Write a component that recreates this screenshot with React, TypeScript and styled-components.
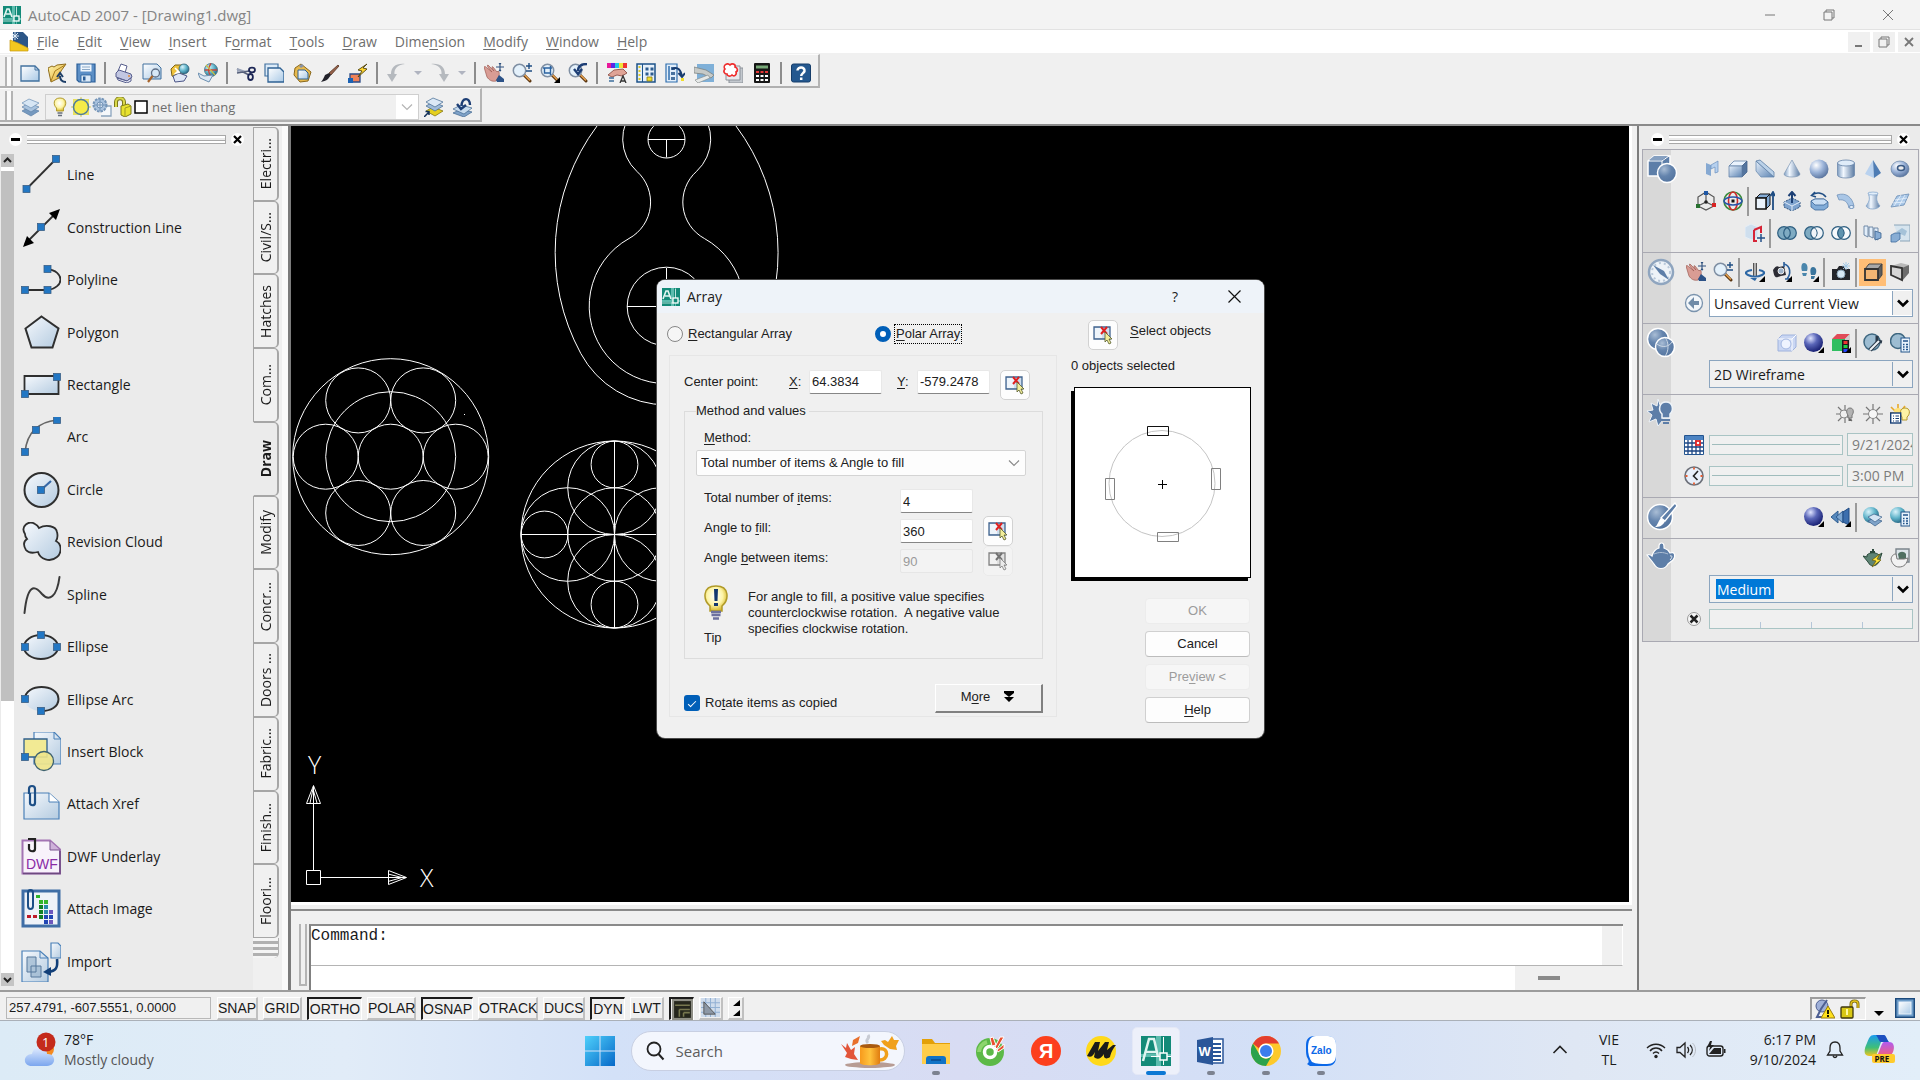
import React from 'react';
import styled, { createGlobalStyle, css } from 'styled-components';

const ui = '"Open Sans", "Noto Sans", sans-serif';
const sans = '"Liberation Sans", Arial, sans-serif';

const GlobalStyle = createGlobalStyle`
  *, *::before, *::after { box-sizing: border-box; }
  body { margin: 0; background: #f0f0f0; font-family: ${ui}; font-size: 14px; color: #1a1a1a; }
  button, input, select { font: inherit; color: inherit; margin: 0; }
  u { text-underline-offset: 2px; }
`;

/* ---------- shell ---------- */
const Shell = styled.div`
  display: flex;
  flex-direction: column;
  height: 100vh;
  overflow: hidden;
`;
const TitleBar = styled.header`
  display: flex;
  align-items: center;
  flex: none;
  height: 30px;
  padding: 0 6px 0 3px;
  gap: 7px;
  background: #f3f3f3;
  border-bottom: 1px solid #e2e2e2;
`;
const Title = styled.h1`
  flex: 1;
  margin: 0;
  font-size: 15px;
  font-weight: 400;
  color: #858585;
`;
const WindowButton = styled.button`
  display: grid;
  place-items: center;
  width: 52px;
  height: 28px;
  padding: 0;
  border: 0;
  background: none;
`;
const MenuBar = styled.nav`
  display: flex;
  align-items: center;
  flex: none;
  height: 23px;
  padding: 0 0 0 9px;
  background: #fff;
`;
const MenuItems = styled.div`
  display: flex;
  flex: 1;
  gap: 18px;
  padding-left: 8px;
`;
const MenuItem = styled.button`
  padding: 0;
  border: 0;
  background: none;
  color: #6e6e6e;
  line-height: 20px;
`;
const MdiButton = styled.button`
  display: grid;
  place-items: center;
  width: 22px;
  height: 20px;
  margin-left: 3px;
  padding: 0;
  border: 0;
  background: #f0f0f0;
`;
const ToolStrips = styled.div`
  display: flex;
  flex-direction: column;
  align-items: flex-start;
  flex: none;
  padding: 1px 0 2px;
`;
const ToolStrip = styled.div<{ $end: number }>`
  display: flex;
  align-items: center;
  height: 34px;
  padding: 4px ${p => p.$end}px 0 5px;
  border-top: 1px solid #fcfcfc;
  border-right: 2px solid #b4b4b4;
  border-bottom: 2px solid #b0b0b0;
`;
const Grip = styled.span`
  align-self: flex-end;
  width: 8px;
  height: 29px;
  margin-right: 3px;
  border: solid #b4b4b4;
  border-width: 0 2px 0 2px;
  background: #fafafa;
`;
const ToolButton = styled.button<{ $w: number }>`
  display: grid;
  place-items: center;
  width: ${p => p.$w}px;
  height: 26px;
  padding: 0;
  border: 0;
  background: none;
`;
const ToolRule = styled.span`
  width: 2px;
  height: 22px;
  margin: 0 4px;
  background: #8c8c8c;
`;
const LayerBox = styled.div`
  display: flex;
  align-items: center;
  width: 374px;
  height: 26px;
  margin: 0 1px;
  padding-left: 4px;
  gap: 1px;
  border: 1px solid #cfcfcf;
  background: #f0f0f0;
`;
const LayerSelect = styled.select`
  flex: 1;
  padding: 0 0 0 3px;
  border: 0;
  appearance: none;
  background: none;
  color: #6e6e6e;
  font-size: 13px;
`;
const LayerArrow = styled.span`
  display: grid;
  place-items: center;
  width: 22px;
  height: 24px;
  background: #fff;
`;

/* ---------- body ---------- */
const Body = styled.div`
  display: flex;
  flex: 1;
  min-height: 0;
  border-top: 2px solid #8a8a8a;
`;
const Palette = styled.aside`
  display: flex;
  flex: none;
  width: 291px;
  border-right: 3px solid #7c7c7c;
  background: #f0f0f0;
`;
const PaletteMain = styled.div`
  display: flex;
  flex-direction: column;
  flex: none;
  width: 253px;
  background: #ebebeb;
`;
const PaletteHead = styled.div`
  display: flex;
  align-items: center;
  flex: none;
  gap: 5px;
  height: 23px;
  padding: 3px 9px 0;
`;
const GripLines = styled.span`
  flex: 1;
  height: 9px;
  border: solid #a8a8a8;
  border-width: 1px 1px 1px 0;
  background: linear-gradient(#fff 2px, #ebebeb 2px 4px, #a8a8a8 4px 5px, #fff 5px);
`;
const RoundButton = styled.button`
  display: grid;
  place-items: center;
  width: 13px;
  height: 13px;
  padding: 0;
  border: 0;
  border-radius: 50%;
  background: #fff;
`;
const PaletteScroll = styled.div`
  display: flex;
  flex: 1;
  min-height: 0;
`;
const ScrollTrack = styled.div`
  display: flex;
  flex-direction: column;
  width: 14px;
  padding: 5px 0 4px 1px;
`;
const ScrollButton = styled.button`
  display: grid;
  place-items: center;
  height: 13px;
  padding: 0;
  border: 0;
  background: #c4c4c4;
`;
const ScrollRail = styled.div`
  flex: 1;
  padding: 4px 0 272px;
  background: #fff;
  &::before { content: ''; display: block; height: 100%; background: #c0c0c0; }
`;
const ToolList = styled.div`
  display: grid;
  grid-auto-rows: 1fr;
  flex: 1;
  padding: 0 0 2px 7px;
`;
const ToolItem = styled.button`
  display: flex;
  align-items: center;
  gap: 6px;
  min-height: 0;
  padding: 0;
  border: 0;
  background: none;
  text-align: left;
  line-height: 20px;
`;
const Tabs = styled.div`
  display: flex;
  flex-direction: column;
  width: 26px;
  padding: 1px 0 32px;
`;
const TabGrid = styled.div`
  display: grid;
  grid-auto-rows: 1fr;
  flex: 1;
`;
const Tab = styled.button<{ $on?: boolean }>`
  display: grid;
  place-items: center;
  min-height: 0;
  padding: 0;
  border: solid #a6a6a6;
  border-width: 1px 2px 1px 1px;
  border-radius: 0 5px 5px 0;
  background: #f0f0f0;
  font-weight: ${p => (p.$on ? 700 : 400)};
  ${p => p.$on && css`border-left-color: #ebebeb; background: #ebebeb;`}
  span { writing-mode: vertical-rl; transform: rotate(180deg); line-height: 20px; }
`;
const TabStack = styled.div`
  height: 20px;
  border-right: 1px solid #b0b0b0;
  border-radius: 0 0 5px 0;
  background: repeating-linear-gradient(#f4f4f4 0 3px, #b0b0b0 3px 6px);
`;
const Divider = styled.div`
  width: 6px;
  margin-left: auto;
  background: #fbfbfb;
`;
const Center = styled.main`
  display: flex;
  flex-direction: column;
  flex: 1;
  min-width: 0;
`;
const Canvas = styled.div`
  position: relative;
  flex: 1;
  min-height: 0;
  margin-right: 5px;
  border-right: 3px solid #fff;
  border-bottom: 3px solid #fff;
  background: #000;
`;
const CanvasArt = styled.svg`
  display: block;
  width: 100%;
  height: 100%;
`;
const CommandPane = styled.div`
  display: flex;
  flex: none;
  gap: 2px;
  margin-top: 4px;
  margin-right: 5px;
  padding: 13px 9px 0 8px;
  border-top: 2px solid #8a8a8a;
`;
const CommandGrip = styled.span`
  width: 8px;
  height: 62px;
  border: solid #b4b4b4;
  border-width: 0 2px 2px;
`;
const CommandBox = styled.div`
  flex: 1;
  border-left: 2px solid #808080;
  border-top: 2px solid #8a8a8a;
  font-family: "Liberation Mono", "Courier New", monospace;
  font-size: 16px;
`;
const CommandLog = styled.div`
  display: flex;
  height: 40px;
  border-right: 1px solid #fff;
  border-bottom: 1px solid #b4b4b4;
  line-height: 21px;
`;
const CommandText = styled.div`
  flex: 1;
  margin-right: 20px;
  background: #fff;
`;
const CommandRow = styled.div`
  display: flex;
  height: 24px;
`;
const CommandInput = styled.input`
  flex: 1;
  border: 0;
  padding: 0;
  background: #fff;
`;
const CommandScroll = styled.div`
  display: grid;
  place-items: center;
  width: 108px;
  padding-right: 40px;
  &::before { content: ''; width: 22px; height: 4px; background: #8a8a8a; }
`;

/* ---------- dashboard ---------- */
const Dashboard = styled.aside`
  flex: none;
  width: 283px;
  padding: 0 1px 0 3px;
  border-left: 2px solid #7c7c7c;
  background: #ebebeb;
`;
const Section = styled.section<{ $end: number }>`
  display: flex;
  border: solid #a9a9b2;
  border-width: 1px 1px 0 1px;
  min-height: ${p => 37 + p.$end}px;
  &:last-child { border-bottom-width: 1px; }
`;
const SectionBadge = styled.div`
  flex: none;
  width: 28px;
  padding: 4px 0 0 4px;
  background: #d8d8d8;
  svg { display: block; overflow: visible; }
`;
const SectionBody = styled.div<{ $end: number }>`
  display: flex;
  flex-direction: column;
  flex: 1;
  min-width: 0;
  padding: 3px 5px ${p => p.$end}px 12px;
`;
const IconRow = styled.div`
  display: flex;
  justify-content: flex-end;
  align-items: center;
  height: 32px;
`;
const DashButton = styled.button<{ $on?: boolean }>`
  display: grid;
  place-items: center;
  width: 27px;
  height: 27px;
  padding: 0;
  border: 0;
  background: ${p => (p.$on ? '#ffbe76' : 'none')};
`;
const DashRule = styled.span`
  width: 2px;
  height: 29px;
  margin: 0 2px 0 1px;
  background: #9a9a9a;
`;
const FieldRow = styled.div<{ $top: number }>`
  display: flex;
  align-items: center;
  gap: 4px;
  margin-top: ${p => p.$top}px;
`;
const FieldIcon = styled.span`
  display: grid;
  place-items: center;
  width: 22px;
  height: 20px;
`;
const DashCombo = styled.div<{ $white?: boolean }>`
  display: flex;
  flex: 1;
  align-items: stretch;
  height: 28px;
  border: 1px solid #8ba5bf;
  background: ${p => (p.$white ? '#fff' : '#f0f0f0')};
  select { flex: 1; min-width: 0; padding: 0 0 0 4px; border: 0; background: none; appearance: none; }
  span { display: grid; place-items: center; width: 20px; margin: 1px 0; border-left: 1px solid #8ba5bf; background: #f0f0f0; }
`;
const ComboInput = styled.input`
  width: 58px;
  height: 20px;
  margin: 3px auto 0 6px;
  padding: 0 1px;
  border: 0;
  background: #0078d7;
  color: #fff;
`;
const Slider = styled.input`
  flex: 1;
  min-width: 0;
  height: 20px;
  border: 1px solid #a9c4c4;
  appearance: none;
  background: linear-gradient(#a0bcbc, #a0bcbc) center / calc(100% - 4px) 1px no-repeat #f0f0f0;
  &::-webkit-slider-thumb { appearance: none; width: 0; }
`;
const DashText = styled.input`
  width: 66px;
  height: 23px;
  padding: 0 0 0 4px;
  border: 1px solid #a9c4c4;
  background: #f0f0f0;
  color: #7c7c7c;
`;
const Ticks = styled.div`
  flex: 1;
  height: 20px;
  border: 1px solid #a9c4c4;
  background: repeating-linear-gradient(90deg, transparent 0 50px, #b5c6d8 50px 51px) 0 100% / 100% 6px no-repeat #f0f0f0;
`;

/* ---------- dialog ---------- */
const Dialog = styled.div`
  position: absolute;
  left: 366px;
  top: 154px;
  width: 607px;
  border-radius: 8px;
  overflow: hidden;
  background: #f0f0f0;
  box-shadow: 0 0 0 1px #4a4a4a;
  font-family: ${sans};
  font-size: 13px;
  line-height: 16px;
  color: #202020;
`;
const DialogHead = styled.div`
  display: flex;
  align-items: center;
  gap: 7px;
  height: 33px;
  padding: 0 4px 0 5px;
  background: #eef3f9;
  font-family: ${ui};
  font-size: 14px;
  h2 { flex: 1; margin: 0; font-size: 14px; font-weight: 400; }
`;
const DialogBody = styled.div`
  display: flex;
  gap: 14px;
  padding: 7px 13px 15px 12px;
`;
const DialogLeft = styled.div`
  width: 389px;
`;
const DialogRight = styled.div`
  display: flex;
  flex-direction: column;
  flex: 1;
`;
const Radios = styled.div`
  display: flex;
  align-items: center;
  height: 28px;
  margin-left: -2px;
`;
const Choice = styled.label<{ $w?: number }>`
  display: flex;
  align-items: center;
  gap: 3px;
  width: ${p => (p.$w ? `${p.$w}px` : 'auto')};
`;
const Radio = styled.input`
  appearance: none;
  width: 16px;
  height: 16px;
  border: 1px solid #868686;
  border-radius: 50%;
  background: #f6f6f6;
  &:checked { border: 5px solid #005fb8; background: #fff; }
`;
const ChoiceText = styled.span<{ $focus?: boolean }>`
  padding: 1px;
  border: 1px ${p => (p.$focus ? 'dotted #000' : 'solid transparent')};
`;
const Panel = styled.div`
  margin-top: 7px;
  padding: 14px 13px 3px 14px;
  border: 1px solid #e6e6e6;
`;
const PointRow = styled.div`
  display: flex;
  align-items: flex-start;
  height: 30px;
  line-height: 24px;
`;
const PointName = styled.span`
  width: 105px;
`;
const AxisName = styled.label`
  width: 20px;
`;
const TextField = styled.input<{ $gap?: number }>`
  width: 73px;
  height: 24px;
  margin-right: ${p => p.$gap ?? 0}px;
  padding: 0 2px;
  border: 1px solid #e8e8e8;
  border-bottom-color: #868686;
  border-radius: 2px;
  background: #fff;
  &:disabled { border-color: #e6e6e6; background: #f3f3f3; color: #9a9a9a; }
`;
const PickButton = styled.button`
  display: grid;
  place-items: center;
  flex: none;
  width: 30px;
  height: 30px;
  padding: 0;
  border: 1px solid #d2d2d2;
  border-radius: 5px;
  background: #fdfdfd;
  &:disabled { border-color: #e8e8e8; background: #f5f5f5; filter: grayscale(1); opacity: 0.75; }
`;
const Methods = styled.fieldset`
  min-width: 0;
  height: 256px;
  margin: 3px 0 0;
  padding: 5px 11px 0;
  border: 1px solid #dcdcdc;
  legend { padding: 0 3px 0 0; line-height: 16px; }
`;
const MethodLabel = styled.label`
  display: block;
  margin: 6px 0 4px 8px;
`;
const MethodCombo = styled.div`
  display: flex;
  align-items: center;
  height: 26px;
  margin: 0 5px 10px 0;
  padding-right: 5px;
  border: 1px solid #d4d4d4;
  border-radius: 2px;
  background: #fdfdfd;
  select { flex: 1; padding: 0 0 0 4px; border: 0; background: none; appearance: none; }
`;
const ValueRow = styled.div`
  display: flex;
  align-items: center;
  gap: 10px;
  height: 30px;
  padding-left: 8px;
  label { width: 186px; padding-bottom: 6px; }
`;
const TipRow = styled.div`
  display: flex;
  gap: 20px;
  margin: 9px 0 0 8px;
  p { margin: 4px 0 0; white-space: pre-line; }
`;
const TipIcon = styled.div`
  width: 24px;
  svg { display: block; margin-bottom: 9px; }
`;
const PanelFoot = styled.div`
  display: flex;
  justify-content: space-between;
  align-items: flex-end;
  margin-top: 25px;
  height: 29px;
`;
const Tick = styled.input`
  appearance: none;
  display: grid;
  place-items: center;
  width: 16px;
  height: 16px;
  border-radius: 3px;
  background: #005fb8;
  &::after { content: ''; width: 8px; height: 4px; border: solid #fff; border-width: 0 0 1px 1px; transform: rotate(-45deg); }
`;
const MoreButton = styled.button`
  display: flex;
  align-items: center;
  justify-content: center;
  gap: 14px;
  width: 108px;
  height: 29px;
  padding: 0 2px 2px 0;
  border: solid;
  border-width: 1px 2px 2px 1px;
  border-color: #fff #808080 #808080 #fff;
  background: #f0f0f0;
`;
const SelectRow = styled.div`
  display: flex;
  gap: 12px;
  padding-left: 17px;
  label { padding-top: 3px; }
`;
const Picked = styled.p`
  margin: 8px 0 13px;
`;
const DialogButtons = styled.div`
  display: flex;
  flex-direction: column;
  align-items: flex-end;
  gap: 7px;
  margin-top: 17px;
  padding-right: 1px;
`;
const DialogButton = styled.button`
  width: 105px;
  height: 26px;
  padding: 0;
  border: 1px solid #d0d0d0;
  border-bottom-color: #bcbcbc;
  border-radius: 4px;
  background: #fdfdfd;
  &:disabled { border-color: #ececec; background: #f6f6f6; color: #9c9c9c; }
`;

/* ---------- status bar ---------- */
const StatusBar = styled.footer`
  display: flex;
  align-items: center;
  flex: none;
  height: 31px;
  padding: 4px 2px 0 6px;
  border-top: 2px solid #9c9c9c;
  border-bottom: 1px solid #aab0b8;
  font-family: ${sans};
`;
const Coords = styled.output`
  width: 205px;
  height: 22px;
  margin-right: 6px;
  padding-left: 2px;
  border: 1px solid #b8b8b8;
  font-size: 13px;
  line-height: 20px;
`;
const Toggle = styled.button<{ $on?: boolean; $w: number }>`
  display: grid;
  place-items: center;
  width: ${p => p.$w}px;
  height: 23px;
  margin-right: 5px;
  padding: 0;
  border: solid;
  border-width: ${p => (p.$on ? '2px 1px 1px 2px' : '1px 2px 2px 1px')};
  border-color: ${p => (p.$on ? '#1c1c1c #fff #fff #1c1c1c' : '#fff #c0c0c0 #c0c0c0 #fff')};
  background: #f0f0f0;
  font-size: 14px;
  line-height: 18px;
  white-space: nowrap;
`;
const Spring = styled.span`
  flex: 1;
`;
const StatusTray = styled.div`
  display: flex;
  align-items: center;
  gap: 5px;
  height: 23px;
  padding: 0 5px 0 3px;
  border: solid;
  border-width: 2px 1px 1px 2px;
  border-color: #9c9c9c #fff #fff #9c9c9c;
`;
const StatusButton = styled.button<{ $low?: boolean }>`
  display: grid;
  justify-items: center;
  align-items: ${p => (p.$low ? 'end' : 'center')};
  width: 26px;
  height: 22px;
  padding: 0;
  border: 0;
  background: none;
`;

/* ---------- taskbar ---------- */
const Taskbar = styled.footer`
  display: grid;
  grid-template-columns: 1fr auto 1fr;
  align-items: center;
  flex: none;
  height: 59px;
  background: linear-gradient(90deg, #dcebf6 0%, #e1ecf8 18%, #d3e1f8 32%, #d8dcf3 50%, #d3e0f7 66%, #dfe7f4 82%, #e2eef9 100%);
`;
const Weather = styled.button`
  display: flex;
  align-items: center;
  justify-self: start;
  gap: 8px;
  padding: 0 0 2px 24px;
  border: 0;
  background: none;
  text-align: left;
  line-height: 20px;
  small { display: block; font-size: 14px; color: #555; }
`;
const TaskCenter = styled.div`
  display: flex;
  align-items: center;
  gap: 7px;
`;
const TaskButton = styled.button<{ $active?: boolean }>`
  display: grid;
  place-items: center;
  width: 48px;
  height: 48px;
  padding: 0;
  border: 1px solid ${p => (p.$active ? '#e4e8f6' : 'transparent')};
  border-radius: 5px;
  background: ${p => (p.$active ? '#edf0fa' : 'none')};
`;
const TaskSlot = styled.div<{ $mark: 'none' | 'dot' | 'bar' }>`
  position: relative;
  &::after {
    content: '';
    position: absolute;
    bottom: 0;
    left: 50%;
    width: ${p => (p.$mark === 'bar' ? 20 : 8)}px;
    margin-left: ${p => (p.$mark === 'bar' ? -10 : -4)}px;
    height: ${p => (p.$mark === 'none' ? 0 : 4)}px;
    border-radius: 2px;
    background: ${p => (p.$mark === 'bar' ? '#0c78d4' : '#7c8290')};
  }
`;
const SearchBox = styled.label`
  display: flex;
  align-items: center;
  width: 274px;
  height: 40px;
  padding: 0 3px 0 13px;
  border: 1px solid #c8cfe2;
  border-radius: 20px;
  background: #f3f6fd;
  input { flex: 1; min-width: 0; margin-left: 11px; padding: 0; border: 0; background: none; font-size: 15px; outline: 0; }
  input::placeholder { color: #5c5c5c; opacity: 1; }
`;
const SystemTray = styled.div`
  display: flex;
  align-items: center;
  justify-self: end;
  gap: 10px;
  padding: 0 14px 2px 0;
  line-height: 20px;
`;
const TrayButton = styled.button<{ $w: number; $end?: boolean }>`
  display: grid;
  justify-items: ${p => (p.$end ? 'end' : 'center')};
  align-items: center;
  width: ${p => p.$w}px;
  min-height: 40px;
  padding: 0;
  border: 0;
  background: none;
  text-align: ${p => (p.$end ? 'right' : 'center')};
  white-space: nowrap;
`;
const GradientSheet = styled.svg`
  position: absolute;
  width: 0;
  height: 0;
`;

/* ---------- drawings ---------- */
const Art = ({ size = 20, h, box, children }: { size?: number; h?: number; box?: string; children: React.ReactNode }) => (
  <svg width={size} height={h ?? size} viewBox={box ?? '0 0 20 20'} fill="none" aria-hidden="true">{children}</svg>
);

const Gradients = () => (
  <GradientSheet aria-hidden="true">
    <defs>
      <linearGradient id="paper" x1="0" y1="0" x2="1" y2="1"><stop stopColor="#fff" /><stop offset="1" stopColor="#a9c9e6" /></linearGradient>
      <linearGradient id="steel" x1="0" y1="0" x2="1" y2="1"><stop stopColor="#e6f0fb" /><stop offset="1" stopColor="#5c83b2" /></linearGradient>
      <linearGradient id="tube" x1="0" y1="0" x2="1" y2="0"><stop stopColor="#7d9cc0" /><stop offset=".35" stopColor="#f2f8ff" /><stop offset="1" stopColor="#5b7ba3" /></linearGradient>
      <linearGradient id="shape" x1="0" y1="0" x2="1" y2="1"><stop stopColor="#f6f9fd" /><stop offset="1" stopColor="#b4cbe0" /></linearGradient>
      <radialGradient id="ball" cx=".35" cy=".3" r=".75"><stop stopColor="#fff" /><stop offset=".5" stopColor="#9db5da" /><stop offset="1" stopColor="#56719c" /></radialGradient>
      <radialGradient id="badge" cx=".35" cy=".3" r=".75"><stop stopColor="#a9bdd5" /><stop offset=".5" stopColor="#6484ad" /><stop offset="1" stopColor="#52739e" /></radialGradient>
      <radialGradient id="navy" cx=".35" cy=".28" r=".75"><stop stopColor="#dfe4ff" /><stop offset=".45" stopColor="#5a66b8" /><stop offset="1" stopColor="#171f72" /></radialGradient>
      <radialGradient id="globe" cx=".35" cy=".3" r=".8"><stop stopColor="#d8f3fb" /><stop offset=".5" stopColor="#5fb3c9" /><stop offset="1" stopColor="#1c5878" /></radialGradient>
      <linearGradient id="gold" x1="0" y1="0" x2="1" y2="1"><stop stopColor="#fff6b0" /><stop offset="1" stopColor="#e3a92a" /></linearGradient>
      <radialGradient id="bulb" cx=".45" cy=".4" r=".6"><stop stopColor="#fff" /><stop offset=".6" stopColor="#fdf4a6" /><stop offset="1" stopColor="#d8b92c" /></radialGradient>
      <linearGradient id="win" x1="0" y1="0" x2="1" y2="1"><stop stopColor="#4fd0fb" /><stop offset="1" stopColor="#0668c8" /></linearGradient>
      <linearGradient id="cloud" x1="0" y1="0" x2="0" y2="1"><stop stopColor="#e3edff" /><stop offset="1" stopColor="#7ba6ee" /></linearGradient>
      <linearGradient id="mug" x1="0" y1="0" x2="1" y2="0"><stop stopColor="#f79a1c" /><stop offset=".5" stopColor="#ffc23c" /><stop offset="1" stopColor="#e07c10" /></linearGradient>
      <linearGradient id="cp1" x1="0" y1="0" x2="0" y2="1"><stop stopColor="#1a9bf0" /><stop offset=".6" stopColor="#3fbf77" /><stop offset="1" stopColor="#f2c51d" /></linearGradient>
      <linearGradient id="cp2" x1="0" y1="0" x2="0" y2="1"><stop stopColor="#b05cf0" /><stop offset="1" stopColor="#f2607c" /></linearGradient>
    </defs>
  </GradientSheet>
);

const AppLogo = ({ size = 18 }: { size?: number }) => (
  <Art size={size} box="0 0 18 18">
    <rect width="18" height="18" fill="#138a78" />
    <path d="M9 0h3v18H9zM13 0h1v18h-1zM0 12h18v2H0z" fill="#5cbcae" />
    <path d="M1 11 4 3h2l3 8M3 8h5" stroke="#e4f6f2" strokeWidth="1.6" />
    <path d="M0 15h11M13.5 1v9" stroke="#d5efea" strokeWidth=".8" />
    <rect x="11" y="10" width="5" height="5" fill="#138a78" stroke="#fff" strokeWidth="1.3" />
  </Art>
);

const lens = (
  <>
    <path d="m12 12 6 6" stroke="#5a3510" strokeWidth="3" strokeLinecap="round" />
    <path d="m12.5 12 5 5" stroke="#e6a04c" strokeWidth="1.5" strokeLinecap="round" />
    <circle cx="7.5" cy="7.5" r="6.2" fill="#e4f1fb" stroke="#7f8fa3" strokeWidth="1.5" />
  </>
);
const hand = (
  <>
    <path d="M0 4c1-1 2 0 3 1L8 9C5 6 2 2 4 2l6 6C8 5 7 3 9 4l4 5 1-1c2 1 1 4 1 6l-3 4c-4 1-7-1-9-4Z" fill="#d99c94" stroke="#9c5a52" strokeWidth=".7" />
    <path d="m12 17 3-5 5 4v3h-7Z" fill="#2c5287" />
    <path d="M16 0v8M12 4h8M15 1l1-1 1 1M15 7l1 1 1-1" stroke="#2c4f7d" strokeWidth="1.1" />
  </>
);
const flyout = <path d="M20 14v6h-6Z" fill="#000" />;
const calc = (
  <g>
    <rect x="11" y="5" width="9" height="14" fill="#e9f3fc" stroke="#23548a" />
    <path d="M13 8h5M13 11.5h1.500M16 11.5h2M13 14h1.500M16 14h2M13 16.5h1.500M16 16.5h2" stroke="#23548a" strokeWidth="1.3" />
  </g>
);

const icons: Record<string, React.ReactNode> = {
  file: <><path d="M1 3h14l4 4v11H1Z" fill="url(#paper)" stroke="#41719f" strokeWidth="1.3" /><path d="M15 3v4h4" stroke="#41719f" /></>,
  open: <><path d="m0 5 4-2 2 1 3-2 9-1-5 7-2 7-8 4Z" fill="url(#gold)" stroke="#8f6c1d" /><path d="M3 18 7 8l10-6" stroke="#a77d1e" /><path d="M18 19c-4 0-6-2-6-6M9 14l3-4 3 4" stroke="#1d3e68" strokeWidth="2" /></>,
  save: <><path d="M1 1h18v18H3l-2-2Z" fill="#5c8fc6" stroke="#2a5e98" strokeWidth="1.2" /><path d="M4.5 1.5h11v7h-11Z" fill="#eef5fc" /><path d="M6 4h8M6 6.5h8" stroke="#8aa8c7" /><path d="M5 12h10v7H5Z" fill="#dbe9f7" stroke="#2a5e98" strokeWidth=".8" /><path d="M7 13.5h2.500v4H7Z" fill="#2a5e98" /></>,
  print: <><path d="m4 8 3-7 6 2-2 7Z" fill="#fff" stroke="#565d8c" /><path d="m2 10 3-3 12 4 1 3-5 4-11-4Z" fill="#c2c7e2" stroke="#565d8c" /><path d="m3 15 10 3 4-3v3l-4 2-9-3Z" fill="#eceefa" stroke="#565d8c" /><circle cx="15" cy="13" r="1" fill="#e08c3c" /></>,
  preview: <><path d="M1 1h14l4 4v11H1Z" fill="url(#paper)" stroke="#41719f" /><circle cx="13.5" cy="10" r="4" fill="#d7e8f7" stroke="#5d6e86" strokeWidth="1.3" /><path d="m10.5 13-4.500 6" stroke="#a7642a" strokeWidth="2.2" /></>,
  publish: <><path d="m1 6 4-4h7l4 5-6 9-8-3Z" fill="#efc23c" stroke="#7d6418" /><circle cx="14" cy="6" r="5" fill="url(#globe)" stroke="#2d6077" strokeWidth=".8" /><path d="m3 13 6-3 8 3-3 5-9 1Z" fill="#dfe6f5" stroke="#4c5688" /><path d="m5 5 3 3-2 2 4-1" stroke="#fff" strokeWidth="1.6" /></>,
  web: <><circle cx="13" cy="7" r="6.5" fill="url(#globe)" stroke="#406f80" strokeWidth=".8" /><path d="M13 .5c-3 4-3 9 0 13M7 7h12" stroke="#c8433a" strokeWidth="1.3" /><path d="m8 2 9 10" stroke="#c9c045" strokeWidth="1.2" /><path d="m0 10 6 3 9-1-4 7-9-4Z" fill="#dbe8f5" stroke="#6c8fb0" /></>,
  cut: <><path d="m1 6 12 6M1 10l12-2" stroke="#56607a" strokeWidth="1.6" /><path d="m1 5 9 3-9 1Z" fill="#9aa3b8" /><ellipse cx="16" cy="7" rx="3" ry="2.3" stroke="#1d2756" strokeWidth="1.8" /><ellipse cx="14.5" cy="14" rx="2.4" ry="3" stroke="#1d2756" strokeWidth="1.8" /></>,
  copy: <><path d="M1 1h13v12H1Z" fill="#dcebf8" stroke="#41719f" strokeWidth="1.2" /><path d="M4 5h12l4 4v10H4Z" fill="url(#paper)" stroke="#2f6294" strokeWidth="1.3" /></>,
  paste: <><path d="m3 5 6-4 10 8-3 9-8 1-6-7Z" fill="#e7b94d" stroke="#8a681b" /><path d="m7 3 3-2 2 2-3 2Z" fill="#8892a5" /><path d="M6 7h7l3 3v6H6Z" fill="url(#paper)" stroke="#2f6294" /></>,
  brush: <><path d="m18 2-9 8 2 2 8-9Z" fill="#96614a" stroke="#553322" strokeWidth=".8" /><path d="m9 10 2 2-3 4c-2 2-5 2-7 3 2-2 3-5 4-7Z" fill="#22222a" /></>,
  matchprop: <><path d="M2 11h10v8H2Z" fill="#ee8158" stroke="#2b4b87" strokeWidth="1.3" /><rect y="15" width="5" height="5" fill="#1b62b4" /><path d="m19 1-9 6 4 1-4 6 9-8-4-1Z" fill="#ffd52e" stroke="#4f4410" strokeWidth=".9" /></>,
  undo: <path d="M19 1C10 0 5 4 5 11H1l5 8 5-8H8.5C8 6 11 2 19 1Z" fill="#b5b9be" />,
  redo: <path d="M1 1c9-1 14 3 14 10h4l-5 8-5-8h2.500C12 6 9 2 1 1Z" fill="#b5b9be" />,
  pan: hand,
  zoom: <>{lens}<path d="M17 0v6M14 3h6M14 8h6" stroke="#1f4d83" strokeWidth="1.4" /></>,
  zoomwin: <>{lens}<path d="M4.5 5h6v5h-6ZM3 5h9M10.5 3v9" stroke="#2a62a0" strokeWidth="1.4" />{flyout}</>,
  zoomprev: <>{lens}<path d="M19 1c-6 0-9 2-9 7M6 6l4 5 4-5" stroke="#1d3e75" strokeWidth="2.4" /></>,
  props: <><path d="M0 0h4v5H0Z" fill="#e8189a" /><path d="M4 0h4v5H4Z" fill="#5a26e6" /><path d="M8 0h4v5H8Z" fill="#21c4e8" /><path d="M12 0h4v5h-4Z" fill="#f0e33a" /><path d="M16 0h4v5h-4Z" fill="#f03232" /><path d="m1 12 6-5 9-1 4 4-5 3-5-1-5 2Z" fill="#e0a496" stroke="#83433a" strokeWidth=".8" /><path d="M2 15h5M2 18h5" stroke="#3d6d9c" strokeWidth="1.5" /><path d="m13 20 3-7 3 7M14 18h4" stroke="#333" strokeWidth="1.3" /></>,
  center: <><path d="M1 1h18v18H1Z" fill="#e6f0fa" stroke="#1c5289" strokeWidth="1.5" /><path d="M3.5 3v14" stroke="#e0cc28" strokeWidth="2" strokeDasharray="2 2" /><path d="M6.5 1v18" stroke="#1c5289" /><path d="M9.5 4.5h3v3h-3ZM14.5 4.5h3v3h-3ZM9.5 9.5h3v3h-3ZM14.5 9.5h3v3h-3Z" fill="#2d5d90" /><path d="M11 14h5v4h-5Z" fill="#f2df2c" stroke="#857a17" strokeWidth=".8" /></>,
  toolpal: <><path d="M1 1h11v18H1Z" fill="#e2eefa" stroke="#2f6eae" strokeWidth="1.2" /><path d="M4 3v14" stroke="#2f6eae" strokeWidth="1.5" /><path d="M6 4h4v3H6ZM6 9h4v3H6ZM6 14h4v3H6Z" fill="#49729f" /><path d="M7 6c6-3 9 1 10 8M13.5 10l3.500 4 3-4" stroke="#183c70" strokeWidth="2" /><path d="M16 15h3v3h-3Z" fill="#f2df2c" /></>,
  sheets: <><path d="M3 1h17v18H3Z" fill="#7fb0d8" /><path d="m0 4 12 3 8 5-3 3-8-4-9-1Z" fill="#c6cac8" stroke="#7e8483" strokeWidth=".8" /><path d="m1 17 13-5 2 3-12 5Z" fill="#e6e9e8" stroke="#8b9190" strokeWidth=".7" /></>,
  markup: <><path d="M6 5h14v15H6Z" fill="#c3c8ce" stroke="#8c9299" /><path d="M3 3h14v14H3Z" fill="#e7eaee" stroke="#8c9299" /><path d="M2 2c2-2 4-1 5 0 2-2 6-1 5 2 3 1 3 4 1 5 1 3-2 5-4 3-2 2-5 1-5-1-3 0-4-3-2-5-1-1-1-3 0-4Z" fill="#fff" stroke="#ee2e2e" strokeWidth="1.7" /></>,
  quickcalc: <><rect x="2" width="16" height="20" rx="1" fill="#161616" /><path d="M4 2.5h12v3H4Z" fill="#77a877" /><path d="M4 9h3M8.5 9h3M13 9h3" stroke="#e53434" strokeWidth="2" /><path d="M4 13h3M8.5 13h3M13 13h3M4 17h3M8.5 17h3M13 17h3" stroke="#fff" strokeWidth="2" /></>,
  help: <><rect x=".5" y="1" width="19" height="18" rx="2" fill="#24588f" stroke="#153d6a" /><path d="M6.5 7.5C6.5 3.5 14 3.5 13.5 8c-.2 2-3.300 2.500-3.300 5M10.2 14.5V17" stroke="#fff" strokeWidth="2.5" /></>,
  layers: <><path d="m2 14 7-4 10 4-8 5Z" fill="#7599bf" stroke="#5d81a8" strokeWidth=".7" /><path d="m2 10 7-4 10 4-8 5Z" fill="#a9c3de" stroke="#5d81a8" strokeWidth=".7" /><path d="m2 6 7-4 10 4-8 5Z" fill="#d7e6f4" stroke="#6b8fb5" strokeWidth=".7" /></>,
  layerset: <><path d="m2 14 7-4 10 4-8 5Z" fill="#e5cf1e" stroke="#867811" strokeWidth=".8" /><path d="m2 9 7-4 10 4-8 5Z" fill="#9fbcda" stroke="#41678f" strokeWidth=".7" /><path d="m2 5 7-4 10 4-8 5Z" fill="#dbe9f6" stroke="#41678f" strokeWidth=".7" /><path d="m0 20 5-5M1.5 14.5H5V18" stroke="#12305a" strokeWidth="1.5" /></>,
  layerprev: <><path d="m1 16 8-4 11 3-8 5Z" fill="#7fa2c8" stroke="#41678f" strokeWidth=".7" /><path d="m1 12 8-4 11 3-8 6Z" fill="#c8dcef" stroke="#41678f" strokeWidth=".7" /><path d="M18 8C18 0 10 0 9.5 9M5 7l4 5 5-4" stroke="#1d3e75" strokeWidth="2.4" /></>,
  bulb: <><path d="M10 1c-7 0-7 7-3.500 10v3h7v-3C17 8 17 1 10 1Z" fill="url(#bulb)" stroke="#b39d32" /><path d="M7.5 16h5M8 18.5h4" stroke="#666e7a" strokeWidth="1.6" /></>,
  sun: <><path d="M2 2h16v16H2Z" fill="#e9e160" /><path d="M0 10h20M10 0v20" stroke="#dccf4a" /><circle cx="10" cy="10" r="7.5" fill="#f5ec48" stroke="#4f7d9c" strokeWidth="1.5" /></>,
  freeze: <><path d="M12 9h7v10H9" stroke="#8ba4bd" strokeWidth="1.3" fill="#f5f8fb" /><circle cx="8" cy="8" r="6.5" fill="#a9c2de" stroke="#7595b8" strokeWidth="2" strokeDasharray="2.5 1" /><circle cx="8" cy="8" r="3" fill="#d5e2f0" stroke="#7595b8" /><path d="M8 2v12M2 8h12" stroke="#7595b8" /></>,
  lock: <><path d="M3 10V5c0-5 8-5 8 0v6" stroke="#7d7a1c" strokeWidth="4" /><path d="M3 10V5c0-5 8-5 8 0v6" stroke="#d9d84b" strokeWidth="2" /><path d="m8 9 7-2 3 2v8l-6 3-4-2Z" fill="#e8e22e" stroke="#7d7a1c" /><path d="m12 11 6-2M12 11v8" stroke="#a19d20" /></>,
  wall: <><path d="m5 4 5 2v11l-5-2Z" fill="#86a9d2" /><path d="m10 6 7-4v11l-3 1v-6l-4 2Z" fill="#b6d0ee" stroke="#6b91bf" strokeWidth=".7" /></>,
  box: <><path d="m1 7 5-5h13l-5 5Z" fill="#eaf3fd" stroke="#6583a8" strokeWidth=".8" /><path d="m14 7 5-5v11l-5 5Z" fill="#54759f" stroke="#44628a" strokeWidth=".8" /><path d="M1 7h13v11H1Z" fill="url(#steel)" stroke="#6583a8" strokeWidth=".8" /></>,
  wedge: <><path d="M1 2v10l5 6h13Z" fill="url(#steel)" stroke="#6c8db2" strokeWidth=".8" /><path d="m1 2 4-1 14 12v5Z" fill="#bad1e8" stroke="#5d7da4" strokeWidth=".8" /></>,
  cone: <path d="M10 1 2 15c0 4 16 4 16 0Z" fill="url(#tube)" stroke="#7f98b5" strokeWidth=".7" />,
  sphere: <circle cx="10" cy="10" r="9.5" fill="url(#ball)" />,
  cylinder: <><path d="M1.5 4v12c0 4 17 4 17 0V4Z" fill="url(#tube)" stroke="#6583a8" strokeWidth=".7" /><ellipse cx="10" cy="4" rx="8.5" ry="3" fill="#dfecf9" stroke="#6583a8" strokeWidth=".8" /></>,
  pyramid: <><path d="M10 1 2 15l9 4Z" fill="#b9d2ef" /><path d="m10 1 1 18 7-5Z" fill="#4e7cb4" /></>,
  torus: <><ellipse cx="10" cy="10" rx="9" ry="8" fill="url(#ball)" stroke="#5b789c" strokeWidth=".6" /><ellipse cx="11" cy="9" rx="3.5" ry="2.5" fill="#ebebeb" stroke="#3b5b85" strokeWidth="1.5" /></>,
  ucs: <><path d="m10 1 8 5v9l-8 4-8-4V6ZM10 1v10M10 11l-8 4M10 11l8 4" stroke="#555" strokeWidth="1.2" /><path d="M8 0h4v4H8Z" fill="#1f57a5" /><path d="M0 13h4v4H0Z" fill="#27702f" /><path d="M16 12h4v4h-4Z" fill="#d82424" /><circle cx="10" cy="11" r="1.8" fill="#222" /></>,
  orbitball: <><circle cx="10" cy="10" r="9" stroke="#3a8a3c" strokeWidth="1.6" /><ellipse cx="10" cy="10" rx="4.500" ry="9" stroke="#d02a2a" strokeWidth="1.6" /><ellipse cx="10" cy="10" rx="9" ry="4" stroke="#2854a8" strokeWidth="1.6" /><path d="M8.5 8.500h3v3h-3Z" fill="#111" /></>,
  extrude: <><path d="m1 7 4-4h10l-4 4ZM11 7l4-4v11l-4 4Z" fill="#83abd6" stroke="#111" /><path d="M1 7h10v11H1Z" fill="#e9f2fb" stroke="#111" strokeWidth="1.5" /><path d="M18 19V3M15.5 5 18 1l2 4" stroke="#1f4d83" strokeWidth="1.8" /></>,
  presspull: <><path d="m10 7 8 4v5l-8 4-8-4v-5Z" fill="#7ea3ce" stroke="#2c527f" strokeDasharray="2 1" /><path d="m2 11 8 4 8-4M10 15v5" stroke="#dfeaf6" /><path d="M10 12V2M6.5 5 10 1l3.500 4" stroke="#1b3f74" strokeWidth="2" /></>,
  revolve: <><path d="m2 10 4-2h9l4 3v5l-4 3H6l-4-3Z" fill="#82acd8" stroke="#3c689a" strokeWidth=".8" /><path d="m2 10 4-2h9l4 3-4 3H6Z" fill="#c9def4" stroke="#3c689a" strokeWidth=".8" /><path d="M17 6C13 1 7 1 3 4M6 1 2.5 4.5 7 6" stroke="#1f4d83" strokeWidth="1.5" /></>,
  sweep: <><path d="M1 4c9-3 15 2 17 11l-5 2C12 11 8 8 3 9Z" fill="#a9c6e6" stroke="#7092ba" strokeWidth=".8" /><ellipse cx="15.5" cy="16" rx="2.5" ry="1.5" fill="#e4effa" stroke="#7092ba" /></>,
  loft: <><path d="M5 2h10c-2 5-2 8 2 13-3 4-12 4-14 0C7 10 7 7 5 2Z" fill="url(#tube)" stroke="#84a6cc" strokeWidth=".8" /><ellipse cx="10" cy="2.5" rx="5" ry="1.5" fill="#e2eefa" stroke="#84a6cc" strokeWidth=".7" /></>,
  planar: <><path d="m7 5 12-2-5 11-13 2Z" fill="#aac8e8" stroke="#7c9cc0" /><path d="m11 4-7 11M15 4 9 15M5 9l12-2M3 12l12-1" stroke="#eaf3fc" strokeWidth=".8" /></>,
  section: <><path d="m0 4 6-3 7 3v10l-6 3-7-3Z" fill="#cfdfee" stroke="#e6eef6" /><path d="m9 7 7-3v6M9 7v11h3" stroke="#d62336" strokeWidth="2" /><path d="M16 11v8M12 15h8" stroke="#24518a" strokeWidth="1.5" /></>,
  union: <><circle cx="7" cy="10" r="6.3" fill="#7fabc2" /><circle cx="13" cy="10" r="6.3" fill="#7fabc2" stroke="#2d5e80" strokeWidth="1.2" /><circle cx="7" cy="10" r="6.3" stroke="#2d5e80" strokeWidth="1.2" /></>,
  subtract: <><circle cx="7" cy="10" r="6.3" fill="#7fabc2" stroke="#2d5e80" strokeWidth="1.2" /><circle cx="13" cy="10" r="6.3" fill="#f0f4f8" stroke="#2d5e80" strokeWidth="1.2" /><path d="M10 4.5a6.300 6.300 0 0 1 0 11" stroke="#2d5e80" /></>,
  intersect: <><circle cx="7" cy="10" r="6.3" fill="#f6f9fc" stroke="#2d5e80" strokeWidth="1.2" /><circle cx="13" cy="10" r="6.3" fill="#f6f9fc" stroke="#2d5e80" strokeWidth="1.2" /><path d="M10 4.5a6.300 6.300 0 0 1 0 11 6.300 6.300 0 0 1 0-11Z" fill="#5e92ae" stroke="#2d5e80" /></>,
  plane3d: <><path d="M1 3h4v11l-4-2ZM6 4h4v11l-4-2ZM11 5h4v12l-4-2Z" fill="#e2eefa" stroke="#64809f" strokeWidth=".9" /><path d="m12 8 6 2v5l-6 2Z" fill="#87acd4" stroke="#3a628f" strokeWidth=".8" /></>,
  flatshot: <><path d="M4 2h16v16H10" fill="#d6e4ee" stroke="#8aa4b8" /><path d="m6 9 6-4 5 3-2 5" fill="#a5c2d8" /><path d="m1 12 4-2h5v6l-4 3H1Z" fill="#88add4" stroke="#3f6c9e" strokeWidth=".8" /></>,
  orbit: <><path d="M10 1v14" stroke="#555" strokeWidth="4" /><path d="M10 1v14" stroke="#ccc" strokeWidth="1.5" /><path d="M7 8c-6 1-8 3-4 5s10 2 14 0 2-4-3-5" stroke="#2d68a6" strokeWidth="2.2" /><path d="m10 19-5-3h7Z" fill="#2d68a6" />{flyout}</>,
  swivel: <><path d="M1 8c3-5 5-4 6-3l5-1 2 9-5 1-3 1c-3 1-4-1-5-7Z" fill="#2c2c34" /><circle cx="9" cy="9" r="3" fill="#9fb5cc" stroke="#eee" /><path d="M12 2c7 2 7 10 3 15M12 0v5M13 17h5" stroke="#2b5f9b" strokeWidth="1.6" />{flyout}</>,
  walk: <><path d="M5 1c4 0 4 6 3 8H3C2 6 2 1 5 1ZM3 11h5l-1 3H4Z" fill="#4a86ac" /><path d="M14 5c4 0 4 6 2 8h-4c-1-4-1-8 2-8ZM12 14h4l-1 3h-3Z" fill="#3a759d" />{flyout}</>,
  camera: <><path d="M1 7h5l2-3h5l1 3h5v11H1Z" fill="#23252b" /><circle cx="10" cy="12" r="4" fill="#d6e8f5" stroke="#8ba4b8" /><path d="M15 0v8M11 4h8M12 1l6 6M18 1l-6 6" stroke="#9ec7e8" strokeWidth=".9" /></>,
  parallel: <><path d="m2 7 4-5h13l-4 5Z" fill="#a8a8a8" stroke="#444" /><path d="m15 7 4-5v11l-4 5Z" fill="#5c5c5c" stroke="#444" /><path d="M2 7h13v11H2Z" fill="#f2b573" stroke="#333" strokeWidth="1.8" /></>,
  perspective: <><path d="m1 4 10-3 8 2-5 4Z" fill="#b9b9b9" /><path d="m12 6 7-3v8l-7 8Z" fill="#6c6c6c" /><path d="m1 4 11 2v12L1 13Z" fill="#d5d5d5" stroke="#333" strokeWidth="1.8" /></>,
  xray: <><path d="m1 6 4-4h14v12l-4 4H1Z" fill="#c9d6f3" stroke="#9eb2dd" /><path d="M1 6h14v12M15 6l4-4" stroke="#fff" /><circle cx="9" cy="11" r="5" fill="#eef3ff" stroke="#a3b7e2" /></>,
  navyball: <><circle cx="9.5" cy="9.5" r="9.5" fill="url(#navy)" />{flyout}</>,
  facecolor: <><path d="m1 6 5-5h13l-5 5Z" fill="#e04b58" /><path d="m14 6 5-5v12l-5 5Z" fill="#ccc" /><path d="M1 6h13v12H1Z" fill="#2fbe60" /><path d="M11 7h7v13h-7Z" fill="#1b1b1b" /><path d="M12.5 8h4v3h-4Z" fill="#e33" /><path d="M12.5 12h4v3h-4Z" fill="#2c4" /><path d="M12.5 16h4v3h-4Z" fill="#24f" />{flyout}</>,
  vstools: <><circle cx="9" cy="9" r="8" fill="#9dbdd2" stroke="#3e6780" strokeWidth="1.5" /><path d="m7 17 9-9" stroke="#2a3a4a" strokeWidth="4" /><path d="m14 3 0 5 5 1" stroke="#2a3a4a" strokeWidth="3" /><path d="m7 17 9-9" stroke="#eef3f7" strokeWidth="2" /></>,
  vsmanager: <><circle cx="8" cy="8" r="7.5" fill="#9dbdd2" stroke="#3e6780" strokeWidth="1.5" />{calc}</>,
  lightgray: <><path d="M9 1v18M0 10h10M2 3l14 14M2 17 9 10" stroke="#777" strokeWidth="1.2" /><circle cx="8" cy="10" r="4" fill="#eee" stroke="#888" /><path d="M14 4c-4 0-4 5-2 7v3h4v-3c2-2 2-7-2-7Z" fill="#b3b3b3" stroke="#777" /><path d="M12.5 16h3" stroke="#666" strokeWidth="2" /></>,
  sungray: <><path d="M10 0v20M0 10h20M3 3l14 14M17 3 3 17" stroke="#777" strokeWidth="1.2" /><circle cx="10" cy="10" r="4.5" fill="#f6f6f6" stroke="#888" /></>,
  lightlist: <><path d="M8 0v5M1 3l4 4M15 2l-3 4M0 9h4" stroke="#e8a92a" strokeWidth="1.6" /><circle cx="8" cy="8" r="4" fill="#ffe27a" /><path d="M15 4c-6 0-5 7-3 9v3h5v-3c3-2 4-9-2-9Z" fill="#fdf3a4" stroke="#b5982e" /><rect x=".7" y="9" width="10" height="10" fill="#fff" stroke="#173f77" strokeWidth="1.4" /><path d="M3 12h1M5.5 12H9M3 14.5h1M5.5 14.5H9M3 17h1M5.5 17H9" stroke="#173f77" /></>,
  calendar: <><path d="M.5.5h19v19H.5Z" fill="#fff" stroke="#23548f" /><path d="M1 1h18v4H1Z" fill="#4c83c2" /><path d="M1 8h18M1 12h18M1 16h18M4 5v14M8 5v14M12 5v14M16 5v14" stroke="#1c4684" strokeWidth="1.3" /><rect x="12" y="6" width="4" height="4" fill="#fff" stroke="#e52828" strokeWidth="1.8" /></>,
  clock: <><circle cx="10" cy="10" r="9" fill="#e8effa" stroke="#6c7079" strokeWidth="1.6" /><path d="M10 1.5v2M10 16.5v2M1.5 10h2M16.5 10h2" stroke="#ea5c2c" strokeWidth="1.8" /><path d="m14 5-4.500 5 4 4" stroke="#222" strokeWidth="1.6" /></>,
  mapping: <><path d="m0 10 7-6v12Z" fill="#5588bd" stroke="#2e5c90" /><path d="m5 10 7-6v12Z" fill="#7ba6d2" stroke="#2e5c90" /><path d="m12 5 6-4v17l-6-3Z" fill="#3c6fae" stroke="#1f4a82" />{flyout}</>,
  matlayers: <><circle cx="8" cy="8" r="8" fill="url(#globe)" /><path d="m5 14 6-3 8 3-7 5Z" fill="#7fa3c9" stroke="#365d88" strokeWidth=".7" /><path d="m5 10 6-3 8 3-7 5Z" fill="#d4e4f3" stroke="#365d88" strokeWidth=".7" /></>,
  matmanager: <><circle cx="8" cy="8" r="8" fill="url(#globe)" />{calc}</>,
  render: <><path d="M4 7c3-3 9-3 12 0l3-2-3 9c-3 5-9 5-11 0L0 8l4 1Z" fill="#5e8474" stroke="#2b4a3c" /><path d="M7 4h5M9 2h2" stroke="#2b4a3c" strokeWidth="2" /><path d="m17 6-8 6 4 1-4 6 9-7-4-1Z" fill="#ffe53a" stroke="#6d6110" strokeWidth=".8" /></>,
  renderwin: <><path d="M6 1h13v13H6Z" fill="#dce5ea" stroke="#7c858c" strokeWidth="1.4" /><path d="M8 6c2-3 6-3 8 0v5H9Z" fill="#4f7062" /><path d="M1 11c1-4 3-5 5-5l1 5h7l4-1c-1 6-4 9-9 9-4 0-7-3-8-8Z" fill="#f2f2f2" stroke="#777" /></>,
  back: <><circle cx="10" cy="10" r="8.5" fill="#f2f6fa" stroke="#7a93ad" strokeWidth="1.3" /><path d="m10 4-6 6 6 6v-4h5V8h-5Z" fill="#6f8ba8" /></>,
  stop: <><circle cx="10" cy="10" r="6.5" fill="#f8f8f8" stroke="#999" /><path d="m6.5 6.5 7 7M13.5 6.5l-7 7" stroke="#222" strokeWidth="2.5" /></>,
  pick: <><path d="M1 2h16v12H1Z" fill="#cfdeee" stroke="#41648f" strokeWidth="1.3" /><path d="M2 3h7v10H2Z" fill="#eef4fa" /><path d="m8 2 6 7M14 2 8 9" stroke="#e02020" strokeWidth="2" /><path d="M12 7v10l2-2 2 4 2-1-2-4h3Z" fill="#f2ee9a" stroke="#555b2c" strokeWidth=".8" /></>,
};

const badges: React.ReactNode[] = [
  <><path d="m1 7 6-5h16v7l-8 13H1Z" fill="#5d7ea8" stroke="#fff" strokeWidth="1.5" /><path d="M1 7h14l7-5M15 7v14" stroke="#fff" /><path d="m2 6 5-4h14l-6 4Z" fill="#86a0c0" /><circle cx="20" cy="19" r="9.5" fill="url(#badge)" stroke="#fff" strokeWidth="1.5" /></>,
  <><circle cx="14" cy="15" r="12" fill="#eef3f8" stroke="#8fa5bf" strokeWidth="2.5" /><circle cx="14" cy="15" r="9" stroke="#b9c8d9" strokeDasharray="2 3" strokeWidth="2" /><path d="m6 8 11 6 5 9-9-6Z" fill="#5d7ea8" /></>,
  <><circle cx="11" cy="11" r="10.500" fill="url(#badge)" stroke="#fff" strokeWidth="1.5" /><circle cx="18" cy="19" r="9.5" fill="url(#badge)" stroke="#fff" strokeWidth="1.5" /><path d="M18 10c4 3 4 14 0 18M10 16c5 4 12 3 15-2" stroke="#c9d6e4" /></>,
  <><path d="m11 0 2 6 5-3-1 6-1 12-5 6-2-7-7 3 3-7-5-4 6-1-2-7 6 3Z" fill="#5d7ea8" stroke="#eef3f8" /><path d="M19 3c-7 0-8 8-4 12v4h8v-4c4-4 3-12-4-12Z" fill="#5d7ea8" stroke="#eef3f8" strokeWidth="1.5" /><path d="M15 21h8M16 24h6" stroke="#5d7ea8" strokeWidth="2" /></>,
  <><circle cx="13" cy="15" r="12.500" fill="url(#badge)" stroke="#fff" strokeWidth="1.5" /><path d="M28 1 14 16l4 3L30 4Z" fill="#5d7ea8" stroke="#fff" strokeWidth="1.3" /><path d="m14 16 4 3c-2 5-6 6-10 6 3-2 3-6 6-9Z" fill="#fff" /></>,
  <><path d="M12 3c0-4 5-4 5 0v2c3 1 5 3 6 5 5-2 6 3 3 7l-5 4c-3 6-11 6-14 0-3-4-4-5-7-9 3-1 4 0 5 1 1-4 4-7 7-8Z" fill="#5d7ea8" stroke="#fff" strokeWidth="1.2" /><path d="M7 11c5-2 9-2 14 0" stroke="#aebfd4" /><path d="M23 13c3-1 2 2 0 4" stroke="#e2e8ef" /></>,
];

const Node = ({ x, y }: { x: number; y: number }) => <rect x={x - 3.5} y={y - 3.5} width="7" height="7" fill="#2277c4" stroke="#3b5f86" strokeWidth=".8" />;
const ink = { stroke: '#2f2f2f', strokeWidth: 1.8 };
const clip = 'M8 10V5c0-4 6-4 6 0v14c0 3-5 3-5 0V9';
const sheet = { fill: 'url(#shape)', stroke: '#4a80b8', strokeWidth: 1.2 };

const drawTools: [string, React.ReactNode][] = [
  ['Line', <><path d="M5.5 34 35 4" {...ink} /><Node x={35} y={4} /><Node x={5.5} y={34} /></>],
  ['Construction Line', <><path d="M4 36 37 3" {...ink} /><path d="m39 1-4 11-7-7ZM2 39l4-11 7 7Z" fill="#000" /><Node x={20} y={19} /></>],
  ['Polyline', <><path d="M4 30h22c18-2 18-19 0-21" {...ink} /><Node x={26.5} y={9} /><Node x={26.5} y={30} /><Node x={4} y={30} /></>],
  ['Polygon', <path d="m20.5 3.5 17 12-6 19h-21l-6-19Z" fill="url(#shape)" {...ink} strokeWidth={2} />],
  ['Rectangle', <><path d="M3.5 11h34v18h-34Z" fill="url(#shape)" {...ink} /><Node x={36} y={12} /><Node x={4} y={29} /></>],
  ['Arc', <><path d="M4 35C6 16 17 5 36 3" stroke="#666" strokeWidth="1.6" /><Node x={4} y={35} /><Node x={15} y={13} /><Node x={36} y={3} /></>],
  ['Circle', <><circle cx="20.5" cy="20" r="17" fill="url(#shape)" {...ink} strokeWidth={2} /><path d="m20 20 10-9" stroke="#3769a8" strokeWidth="2.2" /><Node x={20} y={20} /></>],
  ['Revision Cloud', <path d="M4 12C-1 4 8-2 14 2c2 1 3 2 4 4 7-4 17-2 18 4 1 4 1 6-1 9 7 4 5 13 1 16-7 6-17 2-19-5-4 1-9 2-12-2-3-5-2-9 1-11-1-1-2-3-2-5Z" fill="url(#shape)" {...ink} />],
  ['Spline', <path d="M3.5 38C7 4 16 13 21 19c7 8 15 3 17.500-17" stroke="#3a3a3a" strokeWidth="2" strokeLinecap="round" />],
  ['Ellipse', <><ellipse cx="20" cy="20" rx="17" ry="12" fill="url(#shape)" {...ink} strokeWidth={2} /><Node x={20} y={8} /><Node x={4} y={20} /><Node x={36} y={20} /></>],
  ['Ellipse Arc', <><ellipse cx="20.5" cy="19" rx="17" ry="12" fill="url(#shape)" /><path d="M4 19C4 3 37 3 37.5 19c0 8-8 12-17 12" {...ink} strokeWidth={2} /><Node x={4} y={19} /><Node x={20} y={31} /></>],
  ['Insert Block', <><path d="M13 0h20l7 7v25H13Z" {...sheet} /><path d="M33 0v7h7" stroke="#4a80b8" /><path d="M3 7h23v18H3Z" fill="#f2ea94" stroke="#2f5f8c" strokeWidth="1.3" /><circle cx="23" cy="29" r="9.5" fill="#efe58a" fillOpacity=".9" stroke="#3f6270" strokeWidth="1.3" /><Node x={4} y={25} /></>],
  ['Attach Xref', <><path d="M3 9h25l10 9v17H3Z" {...sheet} /><path d="M28 9v9h10" stroke="#4a80b8" fill="#fff" /><path d={clip} stroke="#1d4f86" strokeWidth="2.2" /></>],
  ['DWF Underlay', <><path d="M1.5 3.5H29l10 9v24H1.5Z" fill="#f8f2fb" stroke="#a373b4" strokeWidth="2" /><path d="M29 4v9h10" fill="#cfb2da" stroke="#7a5590" /><path d="M2 36.5h37V14" stroke="#6d4a80" strokeWidth="1.5" /><text x="5" y="32" fontFamily="Liberation Sans, sans-serif" fontSize="14" fill="#8a2ba5">DWF</text><path d="M7 2h7v10c0 3-5 3-6 0V7" stroke="#222" strokeWidth="2.2" /></>],
  ['Attach Image', <><path d="M2 2h36v35H2Z" fill="#eef2f8" stroke="#3f6ea6" strokeWidth="3" /><path d="M7 9V4c0-4 5-4 5 0v13c0 4-5 4-5 0V9" stroke="#1d4f86" strokeWidth="2" /><path d="M15 6h4v3h-4Z" fill="#2fb52a" /><path d="M18 11h4v4h-4ZM23 11h4v4h-4Z" fill="#35b52a" /><path d="M18 16h4v4h-4ZM18 21h4v4h-4ZM18 26h4v4h-4Z" fill="#138224" /><path d="M23 16h4v4h-4ZM23 21h4v4h-4Z" fill="#2a8aa8" /><path d="M23 26h4v4h-4ZM23 31h4v4h-4ZM28 26h4v4h-4Z" fill="#2146b4" /><path d="M28 21h4v4h-4ZM28 31h4v4h-4Z" fill="#6d57bd" /><path d="M6 26h4v3H6ZM12 26h4v3h-4Z" fill="#bd1b28" /></>],
  ['Import', <><path d="M1 9h18l8 7v24H1Z" {...sheet} /><path d="M19 9v7h8" stroke="#4a80b8" /><path d="M6 15h9v15H6ZM10 24h10v11H10Z" fill="#9bb6cf" fillOpacity=".7" stroke="#56799c" /><path d="M30 1h7l3 3v12H30Z" {...sheet} /><path d="M36 17c1 9-1 12-9 13" stroke="#123f78" strokeWidth="2.6" /><path d="m22 30 8-5v9Z" fill="#123f78" /></>],
];
const paletteTabs = ['Electri...', 'Civil/S...', 'Hatches', 'Com...', 'Draw', 'Modify', 'Concr...', 'Doors ...', 'Fabric...', 'Finish...', 'Floori...'];

const Chevron = ({ c = '#8a8a8a', w = 1.2 }: { c?: string; w?: number }) => <Art size={12} box="0 0 12 12"><path d="m1 3.5 5 5 5-5" stroke={c} strokeWidth={w} /></Art>;
const Caret = () => <Art size={8} box="0 0 8 8"><path d="M0 2h8L4 6Z" fill="#b0b4c0" /></Art>;
const MinusDot = () => <Art size={9} box="0 0 9 9"><path d="M0 4.5h9" stroke="#000" strokeWidth="3" /></Art>;
const CrossDot = () => <Art size={9} box="0 0 9 9"><path d="m1 1 7 7M8 1 1 8" stroke="#000" strokeWidth="2.2" /></Art>;

const Strip = ({ names, w = 28 }: { names: string[]; w?: number }) => (
  <>{names.map((n, i) => {
    if (n === '|') return <ToolRule key={i} />;
    if (n === 'v') return <ToolButton key={i} $w={16} aria-label="History"><Caret /></ToolButton>;
    return <ToolButton key={i} $w={w} aria-label={n}><Art>{icons[n]}</Art></ToolButton>;
  })}</>
);
const DashIcons = ({ names, on }: { names: string[]; on?: string }) => (
  <IconRow>{names.map((n, i) => (n === '|' ? <DashRule key={i} /> : <DashButton key={i} $on={n === on} aria-label={n}><Art>{icons[n]}</Art></DashButton>))}</IconRow>
);
const DashSection = ({ badge, end, children }: { badge: number; end: number; children: React.ReactNode }) => (
  <Section $end={end}>
    <SectionBadge><Art size={30} box="0 0 30 30">{badges[badge]}</Art></SectionBadge>
    <SectionBody $end={end}>{children}</SectionBody>
  </Section>
);
const PanelHead = () => (
  <PaletteHead>
    <RoundButton aria-label="Minimize"><MinusDot /></RoundButton>
    <GripLines />
    <RoundButton aria-label="Close"><CrossDot /></RoundButton>
  </PaletteHead>
);

const petals = [0, 60, 120, 180, 240, 300].map(a => [390.7 + 65 * Math.cos((a * Math.PI) / 180), 456.7 + 65 * Math.sin((a * Math.PI) / 180)]);
const quads = [[0, -1], [1, 0], [0, 1], [-1, 0]];

const Drawing = () => (
  <CanvasArt aria-label="Model space">
    <g transform="translate(-291 -126)" stroke="#fff" strokeWidth="1" fill="none">
      <circle cx="390.7" cy="456.7" r="98" /><circle cx="390.7" cy="456.7" r="65" /><circle cx="390.7" cy="456.7" r="32.5" />
      {petals.map(([x, y], i) => <circle key={i} cx={x} cy={y} r="32.5" />)}
      <circle cx="614.5" cy="534.5" r="93.5" /><circle cx="614.5" cy="534.5" r="46.8" />
      {quads.map(([x, y], i) => (
        <g key={i}>
          <circle cx={614.5 + x * 46.8} cy={534.5 + y * 46.8} r="46.8" />
          <circle cx={614.5 + x * 70} cy={534.5 + y * 70} r="23.4" />
        </g>
      ))}
      <path d="M521 534.5h187M614.5 441v187" />
      <path d="M597 126A212 212 0 0 0 580.8 353.5A97.5 97.5 0 0 0 752.6 353.5A212 212 0 0 0 736 126" />
      <path d="M636.8 171.3A44 44 0 1 1 696.6 171.3A41.4 41.4 0 0 0 704.4 238.5A77.5 77.5 0 1 1 629 238.5A41.4 41.4 0 0 0 636.8 171.3" />
      <circle cx="666.5" cy="139.5" r="18.5" /><path d="M648 139.5h37M666.5 139.5v18" />
      <circle cx="666.5" cy="306.5" r="39.3" /><path d="M627 306.5h79M666.5 268v78" />
      <path d="M464 414.5h1" />
      <path d="M306.5 870.5h14v14h-14ZM313.5 870v-67M306.5 803.5h14l-7-18ZM313.5 786v17M310 803l3-14 4 14M321 877.5h67M388.5 870.5v14l18-7ZM388 877.5h18M388 874l14 3.500-14 4" />
      <g fill="#fff" stroke="none" fontFamily="Open Sans, sans-serif" fontWeight="300" fontSize="25">
        <text x="308" y="774">Y</text><text x="420" y="887">X</text>
      </g>
    </g>
  </CanvasArt>
);

const ArrayPreview = () => (
  <svg width="180" height="194" fill="none" aria-label="Polar array preview">
    <path d="M0 4h177v190H0Z" fill="#000" />
    <rect x="3.5" y=".5" width="176" height="190" fill="#fff" stroke="#000" />
    <circle cx="91" cy="96.5" r="53" stroke="#c4c4c4" />
    <path d="M76.5 39.5h21v9h-21Z" stroke="#111" />
    <path d="M140.5 81.5h9v21h-9ZM86.5 145.5h21v9h-21ZM34.5 91.5h9v21h-9Z" stroke="#808080" />
    <path d="M87 97.5h9M91.5 93v9" stroke="#000" />
  </svg>
);

const ArrayDialog = () => (
  <Dialog role="dialog" aria-labelledby="array-title">
    <DialogHead>
      <AppLogo />
      <h2 id="array-title">Array</h2>
      <WindowButton aria-label="Context help">?</WindowButton>
      <WindowButton aria-label="Close"><Art size={13} box="0 0 13 13"><path d="m.5.5 12 12M12.5.5l-12 12" stroke="#111" strokeWidth="1.2" /></Art></WindowButton>
    </DialogHead>
    <DialogBody>
      <DialogLeft>
        <Radios>
          <Choice $w={208}><Radio type="radio" name="kind" /><ChoiceText><u>R</u>ectangular Array</ChoiceText></Choice>
          <Choice><Radio type="radio" name="kind" defaultChecked /><ChoiceText $focus><u>P</u>olar Array</ChoiceText></Choice>
        </Radios>
        <Panel>
          <PointRow>
            <PointName>Center point:</PointName>
            <AxisName htmlFor="px"><u>X</u>:</AxisName>
            <TextField id="px" defaultValue="64.3834" $gap={15} />
            <AxisName htmlFor="py"><u>Y</u>:</AxisName>
            <TextField id="py" defaultValue="-579.2478" $gap={10} />
            <PickButton aria-label="Pick center point"><Art>{icons.pick}</Art></PickButton>
          </PointRow>
          <Methods>
            <legend>Method and values</legend>
            <MethodLabel htmlFor="method"><u>M</u>ethod:</MethodLabel>
            <MethodCombo>
              <select id="method"><option>Total number of items &amp; Angle to fill</option></select>
              <Chevron />
            </MethodCombo>
            <ValueRow>
              <label htmlFor="total">Total number of <u>i</u>tems:</label>
              <TextField id="total" defaultValue="4" />
            </ValueRow>
            <ValueRow>
              <label htmlFor="fill">Angle to <u>f</u>ill:</label>
              <TextField id="fill" defaultValue="360" />
              <PickButton aria-label="Pick angle to fill"><Art>{icons.pick}</Art></PickButton>
            </ValueRow>
            <ValueRow>
              <label htmlFor="between">Angle <u>b</u>etween items:</label>
              <TextField id="between" defaultValue="90" disabled />
              <PickButton aria-label="Pick angle between items" disabled><Art>{icons.pick}</Art></PickButton>
            </ValueRow>
            <TipRow>
              <TipIcon>
                <Art size={24} h={36} box="0 0 24 36">
                  <path d="M12 1C-2 1-1 15 6 21v5h12v-5C25 15 26 1 12 1Z" fill="url(#bulb)" stroke="#b09a28" strokeWidth="1.5" />
                  <path d="M10 4h4l-.5 12h-3ZM10 18h4v3h-4Z" fill="#14386e" />
                  <path d="M7 27h10M7.5 30h9M9 33.5h6" stroke="#6d71a0" strokeWidth="2.5" />
                </Art>
                Tip
              </TipIcon>
              <p>{'For angle to fill, a positive value specifies\ncounterclockwise rotation.\u00a0 A negative value\nspecifies clockwise rotation.'}</p>
            </TipRow>
          </Methods>
          <PanelFoot>
            <Choice><Tick type="checkbox" defaultChecked /><ChoiceText>Ro<u>t</u>ate items as copied</ChoiceText></Choice>
            <MoreButton>
              <span>M<u>o</u>re</span>
              <Art size={10} h={12} box="0 0 10 12"><path d="M0 0h10v2L5 6 0 2ZM0 6h10L5 11Z" fill="#000" /></Art>
            </MoreButton>
          </PanelFoot>
        </Panel>
      </DialogLeft>
      <DialogRight>
        <SelectRow>
          <PickButton id="pick-objects"><Art>{icons.pick}</Art></PickButton>
          <label htmlFor="pick-objects"><u>S</u>elect objects</label>
        </SelectRow>
        <Picked>0 objects selected</Picked>
        <ArrayPreview />
        <DialogButtons>
          <DialogButton disabled>OK</DialogButton>
          <DialogButton>Cancel</DialogButton>
          <DialogButton disabled>Pre<u>v</u>iew &lt;</DialogButton>
          <DialogButton><u>H</u>elp</DialogButton>
        </DialogButtons>
      </DialogRight>
    </DialogBody>
  </Dialog>
);

const menus: [string, string, string][] = [
  ['', 'F', 'ile'], ['', 'E', 'dit'], ['', 'V', 'iew'], ['', 'I', 'nsert'], ['F', 'o', 'rmat'], ['', 'T', 'ools'],
  ['', 'D', 'raw'], ['Dime', 'n', 'sion'], ['', 'M', 'odify'], ['', 'W', 'indow'], ['', 'H', 'elp'],
];
const toggles: [string, number, boolean][] = [
  ['SNAP', 41, false], ['GRID', 39, false], ['ORTHO', 55, true], ['POLAR', 49, false], ['OSNAP', 52, true],
  ['OTRACK', 60, false], ['DUCS', 42, false], ['DYN', 35, true], ['LWT', 34, false],
];
const restore = <path d="M3 3V1h8v8H9M1 3h8v8H1Z" stroke="#777" />;

const taskApps: [string, 'none' | 'dot' | 'bar', React.ReactNode][] = [
  ['File Explorer', 'dot', <><path d="M1 3h10l3 4h15v20H1Z" fill="#e3a008" /><path d="M1 8h28v20H1Z" fill="#ffcd4a" /><path d="M5 23c0-2 1-3 3-3h14c2 0 3 1 3 3v5H5Z" fill="#1173c6" /><path d="M10 24h10" stroke="#0a4a8c" strokeWidth="1.5" /></>],
  ['Coc Coc', 'none', <><circle cx="14" cy="16" r="14" fill="#5cb947" /><path d="M3 16A11 11 0 0 1 11 6" stroke="#8ed56e" strokeWidth="4" /><circle cx="14" cy="16" r="5.500" stroke="#fff" strokeWidth="3.5" /><path d="m16 10-2-8 3-1 3 8ZM19 11l5-10 4 0-7 12ZM21 14l7-6v4l-6 4Z" fill="#e9502f" stroke="#fff" /></>],
  ['Yandex', 'none', <><circle cx="15" cy="15" r="15" fill="#fc3f1d" /><text x="8" y="22" fontFamily="Liberation Sans, sans-serif" fontWeight="700" fontSize="20" fill="#fff">Я</text></>],
  ['Movies', 'none', <><circle cx="15" cy="15" r="15" fill="#ffd91a" /><path d="M1 20 9 6h5l-2 9 7-9h4l-2 8 6-5h3c-4 5-5 8-6 12-4 3-7 1-6-3-3 5-7 6-10 3l1-5c-2 4-4 6-8 4Z" fill="#1b1b1b" /></>],
  ['AutoCAD 2007', 'bar', <g><rect width="30" height="30" fill="#138a78" /><path d="M15 0h5v30h-5ZM0 18h30v3H0Z" fill="#5cbcae" /><path d="M2 25 8 3h5l4 18M5 16h10" stroke="#dff4f0" strokeWidth="2.5" fill="none" /><path d="M22.5 1v28M10 20.5h20" stroke="#fff" /><rect x="19" y="17" width="7" height="7" fill="#138a78" stroke="#fff" strokeWidth="1.5" /></g>],
  ['Word', 'dot', <><path d="M13 3h14v24H13Z" fill="#fff" stroke="#2a5699" strokeWidth="1.5" /><path d="M17 8h8M17 12h8M17 16h8M17 20h8M17 24h8" stroke="#2a5699" strokeWidth="2" /><path d="m1 4 16-3v28L1 26Z" fill="#2a5699" /><text x="2.5" y="20" fontFamily="Liberation Sans, sans-serif" fontWeight="700" fontSize="13" fill="#fff">W</text></>],
  ['Chrome', 'dot', <><circle cx="15" cy="15" r="15" fill="#fdc92b" /><path d="M2 7.5A15 15 0 0 1 28 7.5H15a7.500 7.500 0 0 0-7 5Z" fill="#e43e2f" /><path d="M2 7.5A15 15 0 0 0 15 30l6.500-11.500c-4 6-11 5-13 0Z" fill="#2ba24c" /><circle cx="15" cy="15" r="7.5" fill="#fff" /><circle cx="15" cy="15" r="6" fill="#3b7ded" /></>],
  ['Zalo', 'dot', <><path d="M9 0h12c6 0 9 3 9 9v12c0 6-3 9-9 9H4l-3-2c2-1 2-3 1-5-2-3-2-6-2-14 0-6 3-9 9-9Z" fill="#0b68e8" /><path d="M10 0h12c5 0 8 3 8 9v10c0 6-3 9-9 9-6 0-11 0-15-2-3-4-4-8-4-14C2 5 4 0 10 0Z" fill="#fff" /><text x="5" y="18" fontFamily="Liberation Sans, sans-serif" fontWeight="700" fontSize="10" fill="#0b68e8">Zalo</text></>],
];

export default function App() {
  return (
    <Shell>
      <GlobalStyle />
      <Gradients />
      <TitleBar>
        <AppLogo />
        <Title>AutoCAD 2007 - [Drawing1.dwg]</Title>
        <WindowButton aria-label="Minimize"><Art size={12} box="0 0 12 12"><path d="M1 6h10" stroke="#777" /></Art></WindowButton>
        <WindowButton aria-label="Restore"><Art size={12} box="0 0 12 12">{restore}</Art></WindowButton>
        <WindowButton aria-label="Close"><Art size={12} box="0 0 12 12"><path d="m1 1 10 10M11 1 1 11" stroke="#777" /></Art></WindowButton>
      </TitleBar>
      <MenuBar>
        <Art><path d="M4 0h10l5 5v13H4Z" fill="#2c5687" /><path d="m1 8 8 3 10 5v3H1Z" fill="#f2c81f" stroke="#c79a10" strokeWidth=".7" /><path d="M6 0v8M2 4h8M3 1l6 6M9 1 3 7" stroke="#e5f0fa" strokeWidth=".9" /></Art>
        <MenuItems>{menus.map(([a, b, c]) => <MenuItem key={a + b + c}>{a}<u>{b}</u>{c}</MenuItem>)}</MenuItems>
        <MdiButton aria-label="Minimize drawing"><Art size={10} box="0 0 10 10"><path d="M1 9h7" stroke="#777" strokeWidth="2" /></Art></MdiButton>
        <MdiButton aria-label="Restore drawing"><Art size={12} box="0 0 12 12">{restore}</Art></MdiButton>
        <MdiButton aria-label="Close drawing"><Art size={10} box="0 0 10 10"><path d="m1 1 8 8M9 1 1 9" stroke="#777" strokeWidth="1.8" /></Art></MdiButton>
      </MenuBar>
      <ToolStrips>
        <ToolStrip $end={3}>
          <Grip />
          <Strip names={['file', 'open', 'save', '|', 'print', 'preview', 'publish', 'web', '|', 'cut', 'copy', 'paste', 'brush', 'matchprop', '|', 'undo', 'v', 'redo', 'v', '|', 'pan', 'zoom', 'zoomwin', 'zoomprev', '|']} />
          <Strip w={29} names={['props', 'center', 'toolpal', 'sheets', 'markup', 'quickcalc', '|', 'help']} />
        </ToolStrip>
        <ToolStrip $end={4}>
          <Grip />
          <Strip names={['layers']} />
          <LayerBox>
            {['bulb', 'sun', 'freeze', 'lock'].map(n => <Art key={n}>{icons[n]}</Art>)}
            <Art size={14} box="0 0 14 14"><rect x="1" y="1" width="12" height="12" fill="#fff" stroke="#000" strokeWidth="1.5" /></Art>
            <LayerSelect aria-label="Layer"><option>net lien thang</option></LayerSelect>
            <LayerArrow><Chevron c="#b4b4b4" /></LayerArrow>
          </LayerBox>
          <Strip names={['layerset', 'layerprev']} />
        </ToolStrip>
      </ToolStrips>

      <Body>
        <Palette>
          <PaletteMain>
            <PanelHead />
            <PaletteScroll>
              <ScrollTrack>
                <ScrollButton aria-label="Scroll up"><Art size={9} box="0 0 9 9"><path d="m1 6 3.500-3.500L8 6" stroke="#222" strokeWidth="2" /></Art></ScrollButton>
                <ScrollRail />
                <ScrollButton aria-label="Scroll down"><Art size={9} box="0 0 9 9"><path d="m1 3 3.500 3.500L8 3" stroke="#222" strokeWidth="2" /></Art></ScrollButton>
              </ScrollTrack>
              <ToolList>
                {drawTools.map(([name, art]) => <ToolItem key={name}><Art size={40} box="0 0 40 40">{art}</Art>{name}</ToolItem>)}
              </ToolList>
            </PaletteScroll>
          </PaletteMain>
          <Tabs>
            <TabGrid role="tablist">
              {paletteTabs.map(t => <Tab key={t} role="tab" aria-selected={t === 'Draw'} $on={t === 'Draw'}><span>{t}</span></Tab>)}
            </TabGrid>
            <TabStack />
          </Tabs>
          <Divider />
        </Palette>

        <Center>
          <Canvas>
            <Drawing />
            <ArrayDialog />
          </Canvas>
          <CommandPane>
            <CommandGrip />
            <CommandBox>
              <CommandLog><CommandText>Command:</CommandText></CommandLog>
              <CommandRow>
                <CommandInput aria-label="Command line" />
                <CommandScroll />
              </CommandRow>
            </CommandBox>
          </CommandPane>
        </Center>

        <Dashboard>
          <PanelHead />
          <DashSection badge={0} end={3}>
            <DashIcons names={['wall', 'box', 'wedge', 'cone', 'sphere', 'cylinder', 'pyramid', 'torus']} />
            <DashIcons names={['ucs', 'orbitball', '|', 'extrude', 'presspull', 'revolve', 'sweep', 'loft', 'planar']} />
            <DashIcons names={['section', '|', 'union', 'subtract', 'intersect', '|', 'plane3d', 'flatshot']} />
          </DashSection>
          <DashSection badge={1} end={6}>
            <DashIcons on="parallel" names={['pan', 'zoom', '|', 'orbit', 'swivel', 'walk', '|', 'camera', '|', 'parallel', 'perspective']} />
            <FieldRow $top={1}>
              <FieldIcon><Art>{icons.back}</Art></FieldIcon>
              <DashCombo $white><select aria-label="View"><option>Unsaved Current View</option></select><span><Chevron c="#000" w={2.6} /></span></DashCombo>
            </FieldRow>
          </DashSection>
          <DashSection badge={2} end={6}>
            <DashIcons names={['xray', 'navyball', 'facecolor', '|', 'vstools', 'vsmanager']} />
            <FieldRow $top={1}>
              <FieldIcon />
              <DashCombo><select aria-label="Visual style"><option>2D Wireframe</option></select><span><Chevron c="#000" w={2.6} /></span></DashCombo>
            </FieldRow>
          </DashSection>
          <DashSection badge={3} end={10}>
            <DashIcons names={['lightgray', 'sungray', 'lightlist']} />
            <FieldRow $top={3}>
              <FieldIcon><Art>{icons.calendar}</Art></FieldIcon>
              <Slider type="range" aria-label="Date" /><DashText aria-label="Date value" defaultValue="9/21/2024" />
            </FieldRow>
            <FieldRow $top={8}>
              <FieldIcon><Art>{icons.clock}</Art></FieldIcon>
              <Slider type="range" aria-label="Time" /><DashText aria-label="Time value" defaultValue="3:00 PM" />
            </FieldRow>
          </DashSection>
          <DashSection badge={4} end={4}>
            <DashIcons names={['navyball', 'mapping', '|', 'matlayers', 'matmanager']} />
          </DashSection>
          <DashSection badge={5} end={12}>
            <DashIcons names={['render', 'renderwin']} />
            <FieldRow $top={1}>
              <FieldIcon />
              <DashCombo><ComboInput aria-label="Render quality" defaultValue="Medium" /><span><Chevron c="#000" w={2.6} /></span></DashCombo>
            </FieldRow>
            <FieldRow $top={6}>
              <FieldIcon><Art>{icons.stop}</Art></FieldIcon>
              <Ticks />
            </FieldRow>
          </DashSection>
        </Dashboard>
      </Body>

      <StatusBar>
        <Coords>257.4791, -607.5551, 0.0000</Coords>
        {toggles.map(([t, w, on]) => <Toggle key={t} $w={w} $on={on}>{t}</Toggle>)}
        <Toggle $w={25} $on aria-label="Paper space"><Art size={21} box="0 0 20 20"><rect width="20" height="20" fill="#8f8f86" /><rect x="2" y="2" width="16" height="16" fill="#25261c" /><path d="M3 6h14M7 10h10M7 10v7M11 13h6M11 13v4" stroke="#77774f" strokeWidth="1.5" /></Art></Toggle>
        <Toggle $w={24} aria-label="Model space"><Art size={19}><rect width="20" height="20" fill="#cfdcec" /><path d="M0 5h20M0 10h20M0 15h20M5 0v20M10 0v20M15 0v20" stroke="#8faed2" /><path d="M3 4v13h12Z" fill="#8d98a6" stroke="#555" /></Art></Toggle>
        <Toggle $w={16} aria-label="Layout tabs"><Art size={10} h={18} box="0 0 10 18"><path d="M9 1v6H2ZM9 11v6H2Z" fill="#000" /></Art></Toggle>
        <Spring />
        <StatusTray>
          <Art><circle cx="7" cy="7" r="6" fill="#9fb0d8" stroke="#4e5f92" /><path d="m12 1-6 9-4 8h8" stroke="#4e5f92" strokeWidth="2" /><path d="m13 7 7 12H6Z" fill="#ffe11c" stroke="#9a7d0e" /><path d="M13 11v4M13 16v2" stroke="#000" strokeWidth="1.8" /></Art>
          <Art><path d="M11 9V5c0-4 7-4 7 0v4" stroke="#7b6a12" strokeWidth="3" /><path d="M11 9V5c0-4 7-4 7 0v4" stroke="#e8c61d" strokeWidth="1.3" /><rect x="1" y="8" width="12" height="11" rx="1" fill="#d8c714" stroke="#3c360b" strokeWidth="1.3" /><path d="M7 10v6" stroke="#fff9a0" strokeWidth="2" /></Art>
        </StatusTray>
        <StatusButton $low aria-label="Tray menu"><Art size={10} box="0 0 10 10"><path d="M0 2h10L5 7Z" fill="#000" /></Art></StatusButton>
        <StatusButton aria-label="Clean screen"><Art><rect x=".7" y=".7" width="18.6" height="18.6" fill="#6d9cc8" stroke="#1c4a7c" strokeWidth="1.5" /><rect x="4" y="4" width="12" height="12" fill="url(#paper)" stroke="#e9f2fb" /></Art></StatusButton>
      </StatusBar>

      <Taskbar>
        <Weather>
          <Art size={32} h={36} box="0 0 32 36">
            <circle cx="22" cy="17" r="8" fill="#f58a1f" />
            <path d="M8 34c-10 0-9-12 0-12 2-10 15-9 15 0 9-1 10 12 0 12Z" fill="url(#cloud)" />
            <circle cx="22" cy="10" r="9.5" fill="#c42b1c" />
            <text x="18" y="15" fontFamily="Open Sans, sans-serif" fontSize="13" fill="#fff">1</text>
          </Art>
          <span>78°F<small>Mostly cloudy</small></span>
        </Weather>
        <TaskCenter>
          <TaskButton aria-label="Start"><Art size={30} box="0 0 30 30"><path d="M0 0h14.500v14.500H0ZM15.5 0H30v14.500H15.5ZM0 15.5h14.500V30H0ZM15.5 15.5H30V30H15.5Z" fill="url(#win)" /></Art></TaskButton>
          <SearchBox>
            <Art><circle cx="9" cy="8" r="6.5" stroke="#222" strokeWidth="1.8" /><path d="m13.5 13 5 5.500" stroke="#222" strokeWidth="2" /></Art>
            <input type="search" placeholder="Search" aria-label="Search" />
            <Art size={62} h={34} box="0 0 62 34">
              <ellipse cx="31" cy="31" rx="25" ry="3" fill="#b79c94" />
              <path d="m2 10 5 4 1-5 4 7 4-3-1 7 4 6-7-1-6-2 2-4Z" fill="#e2553a" /><path d="m14 6 7-4-2 7-6 3Z" fill="#e8702e" />
              <path d="m42 7 4-1 3 2 4-6 2 4 5 0-3 6 1 4-7-1-6-4Z" fill="#f0a01c" />
              <path d="M41 15c9-2 9 12-1 11" stroke="#f0a01c" strokeWidth="3.5" />
              <path d="M21 12h20v17c0 3-20 3-20 0Z" fill="url(#mug)" /><ellipse cx="31" cy="12" rx="10" ry="2" fill="#a95a10" />
              <path d="M29 9c-4-4 3-4 0-8" stroke="#c9ccd4" strokeWidth="3" />
            </Art>
          </SearchBox>
          {taskApps.map(([name, mark, art]) => (
            <TaskSlot key={name} $mark={mark}><TaskButton $active={mark === 'bar'} aria-label={name}><Art size={30} box="0 0 30 30">{art}</Art></TaskButton></TaskSlot>
          ))}
        </TaskCenter>
        <SystemTray>
          <TrayButton $w={24} aria-label="Hidden icons"><Art size={16} box="0 0 16 16"><path d="m1.5 11 6.500-6.500 6.500 6.500" stroke="#222" strokeWidth="1.6" /></Art></TrayButton>
          <TrayButton $w={54}><span>VIE<br />TL</span></TrayButton>
          <TrayButton $w={20} aria-label="Wi-Fi"><Art><path d="M1 8c5-5 13-5 18 0M4 11c3-4 9-4 12 0M7 13.5c2-2 4-2 6 0" stroke="#222" strokeWidth="1.4" /><circle cx="10" cy="16.5" r="1.7" fill="#222" /></Art></TrayButton>
          <TrayButton $w={20} aria-label="Volume"><Art><path d="M1 7.5h3L9 3v14l-5-4.500H1Z" stroke="#222" strokeWidth="1.3" /><path d="M11.5 7c1.500 2 1.500 4 0 6M14 5c3 3 3 7 0 10" stroke="#222" strokeWidth="1.3" /><path d="M16.5 3c4 4 4 10 0 14" stroke="#b8bcc4" /></Art></TrayButton>
          <TrayButton $w={20} aria-label="Battery"><Art><rect x="1" y="6" width="16" height="10" rx="2.5" stroke="#222" strokeWidth="1.4" /><path d="m3 14 5-6h7v6Z" fill="#222" /><path d="M18 9h1.500v4H18Z" fill="#222" /><path d="M4 1 1 7h3l-1 4 5-6H5l1-4Z" fill="#222" /></Art></TrayButton>
          <TrayButton $w={80} $end><span>6:17 PM<br />9/10/2024</span></TrayButton>
          <TrayButton $w={18} aria-label="Notifications"><Art size={18} box="0 0 18 18"><path d="M9 1C5 1 4 4 4 7v3l-2.500 4h15L14 10V7c0-3-1-6-5-6ZM7 15c1 2 3 2 4 0" stroke="#222" strokeWidth="1.3" /></Art></TrayButton>
          <TrayButton $w={52} aria-label="Copilot">
            <Art size={32} box="0 0 32 32">
              <path d="M10 1h9c3 0 4 6 6 7h-8l-5 14H5c-6 0-5-7-2-13 2-5 3-8 7-8Z" fill="url(#cp1)" /><path d="M12 1h8c2 0 3 5 5 7h-8c-2 0-3-5-5-7Z" fill="#1c4fc0" />
              <path d="M20 8h5c5 0 6 5 4 10-2 4-3 4-5 4H12c3 0 5-14 8-14Z" fill="url(#cp2)" />
              <rect x="8" y="20" width="23" height="9" rx="2" fill="#ffcb2d" />
              <text x="10.5" y="28" fontFamily="Open Sans, sans-serif" fontWeight="700" fontSize="8" fill="#111">PRE</text>
            </Art>
          </TrayButton>
        </SystemTray>
      </Taskbar>
    </Shell>
  );
}
